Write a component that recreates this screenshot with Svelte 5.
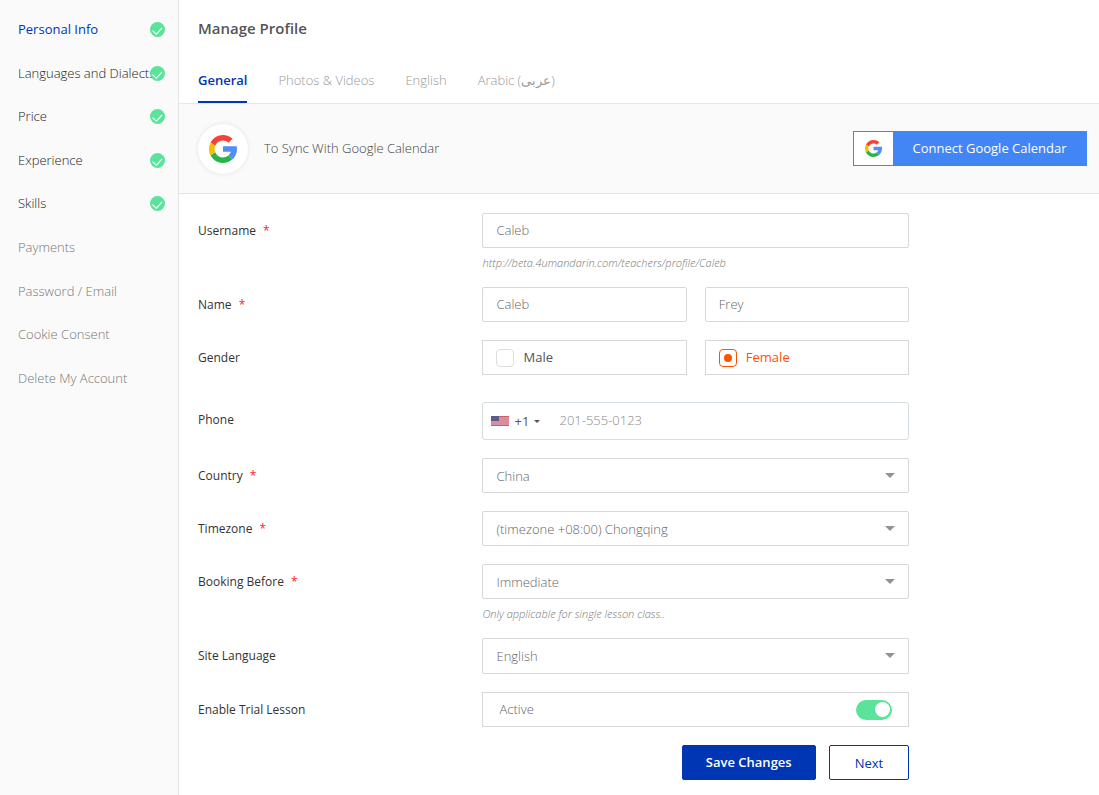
<script>
  const menu = [
    { title: 'Personal Info', done: true, active: true },
    { title: 'Languages and Dialects', done: true },
    { title: 'Price', done: true },
    { title: 'Experience', done: true },
    { title: 'Skills', done: true },
    { title: 'Payments' },
    { title: 'Password / Email' },
    { title: 'Cookie Consent' },
    { title: 'Delete My Account' }
  ];

  const tabs = ['General', 'Photos & Videos', 'English', 'Arabic (عربى)'];
  let activeTab = 'General';

  let username = 'Caleb';
  let firstName = 'Caleb';
  let lastName = 'Frey';
  let gender = 'Female';
  let phone = '';
  let trial = true;

  function save() {}
</script>

{#snippet google()}
  <svg class="google" viewBox="4 4 40 40" aria-hidden="true">
    <path fill="#f44336" d="M24 12c3 0 5.800 1.150 7.960 3.040l5.660-5.660C34.050 6.050 29.270 4 24 4 16.320 4 9.660 8.340 6.310 14.690l6.570 4.820C14.660 15.110 18.960 12 24 12z" />
    <path fill="#fbbc05" d="M6.310 14.690A19.900 19.900 0 0 0 4 24c0 3.370.84 6.540 2.310 9.310l6.570-4.820a12 12 0 0 1 0-8.980z" />
    <path fill="#28b446" d="M24 44c5.170 0 9.860-1.980 13.410-5.190l-6.190-5.240A11.900 11.900 0 0 1 24 36c-5.040 0-9.340-3.110-11.120-7.510l-6.570 4.820C9.660 39.660 16.320 44 24 44z" />
    <path fill="#518ef8" d="M43.610 20H24v8h11.300a12 12 0 0 1-4.080 5.570l6.190 5.240C36.970 39.200 44 34 44 24c0-1.340-.14-2.650-.39-4z" />
  </svg>
{/snippet}

<div class="page">
  <aside>
    <ul>
      {#each menu as item}
        <li>
          <a href="#menu" class:active={item.active} class:done={item.done}>{item.title}</a>
          {#if item.done}
            <svg class="check" viewBox="0 0 14 14" aria-hidden="true">
              <circle cx="7" cy="7" r="7" fill="#5be39b" />
              <path d="M2.300 8l3.700 3.400 5.300-5.900" fill="none" stroke="#fff" stroke-width="1" />
            </svg>
          {/if}
        </li>
      {/each}
    </ul>
  </aside>

  <main>
    <h1>Manage Profile</h1>

    <nav>
      {#each tabs as tab}
        <button type="button" class:active={tab === activeTab} on:click={() => (activeTab = tab)}>{tab}</button>
      {/each}
    </nav>

    <section class="sync">
      <span class="circle">{@render google()}</span>
      <p>To Sync With Google Calendar</p>
      <button type="button" class="connect">
        <span class="connect-icon">{@render google()}</span>
        <span class="connect-text">Connect Google Calendar</span>
      </button>
    </section>

    <form on:submit|preventDefault={save}>
      <div class="row">
        <label class="title" for="username">Username <i>*</i></label>
        <div>
          <input id="username" class="field" type="text" bind:value={username} />
          <p class="hint">http://beta.4umandarin.com/teachers/profile/{username}</p>
        </div>
      </div>

      <div class="row">
        <label class="title" for="first-name">Name <i>*</i></label>
        <div class="pair">
          <input id="first-name" class="field" type="text" bind:value={firstName} />
          <input class="field" type="text" aria-label="Last name" bind:value={lastName} />
        </div>
      </div>

      <div class="row gender">
        <span class="title" id="gender-title">Gender</span>
        <div class="pair" role="radiogroup" aria-labelledby="gender-title">
          {#each ['Male', 'Female'] as option}
            <label class="box radio" class:checked={gender === option}>
              <input type="radio" name="gender" value={option} bind:group={gender} />
              <span>{option}</span>
            </label>
          {/each}
        </div>
      </div>

      <div class="row">
        <label class="title" for="phone">Phone</label>
        <div class="phone">
          <button type="button" class="code">
            <svg class="flag" viewBox="0 0 18 10" aria-hidden="true">
              <rect width="18" height="10" fill="#db8e99" />
              <path d="M0 .5h18M0 9.500h18" stroke="#c9606f" />
              <rect width="8" height="5" fill="#5b5b8e" />
            </svg>
            <span>+1</span>
            <span class="caret"></span>
          </button>
          <input id="phone" type="tel" placeholder="201-555-0123" bind:value={phone} />
        </div>
      </div>

      <div class="row">
        <label class="title" for="country">Country <i>*</i></label>
        <div class="select">
          <select id="country" class="field"><option>China</option></select>
        </div>
      </div>

      <div class="row">
        <label class="title" for="timezone">Timezone <i>*</i></label>
        <div class="select">
          <select id="timezone" class="field"><option>(timezone +08:00) Chongqing</option></select>
        </div>
      </div>

      <div class="row">
        <label class="title" for="booking">Booking Before <i>*</i></label>
        <div>
          <div class="select">
            <select id="booking" class="field"><option>Immediate</option></select>
          </div>
          <p class="hint">Only applicable for single lesson class..</p>
        </div>
      </div>

      <div class="row">
        <label class="title" for="language">Site Language</label>
        <div class="select">
          <select id="language" class="field tall"><option>English</option></select>
        </div>
      </div>

      <div class="row">
        <label class="title" for="trial">Enable Trial Lesson</label>
        <div class="box trial">
          <span>Active</span>
          <input id="trial" type="checkbox" bind:checked={trial} />
        </div>
      </div>

      <div class="actions">
        <button type="submit" class="primary">Save Changes</button>
        <button type="button">Next</button>
      </div>
    </form>
  </main>
</div>

<style>
  :global(body) {
    background: #fff;
  }
  * {
    box-sizing: border-box;
  }
  .page {
    display: flex;
    min-height: 100vh;
    font-family: "Open Sans", "Noto Sans", "DejaVu Sans", sans-serif;
    font-size: 13px;
    color: #555;
  }
  button,
  input,
  select {
    font: inherit;
    margin: 0;
  }
  button {
    cursor: pointer;
  }

  /* sidebar */
  aside {
    flex: none;
    width: 179px;
    padding-top: 8px;
    background: #fafafa;
    border-right: 1px solid #e4e4e4;
  }
  ul {
    display: grid;
    grid-auto-rows: 1fr;
    height: 392px;
    margin: 0;
    padding: 0 13px 0 18px;
    list-style: none;
  }
  li {
    display: flex;
    align-items: center;
    justify-content: space-between;
  }
  li a {
    padding-bottom: 1px;
    color: #777;
    font-weight: 300;
    text-decoration: none;
    white-space: nowrap;
  }
  li a.done {
    color: #222;
  }
  li a.active {
    color: #0035b3;
    font-weight: 500;
  }
  .check {
    flex: none;
    width: 15px;
    height: 15px;
    margin-left: -10px;
  }

  /* header */
  main {
    flex: 1;
    min-width: 0;
  }
  h1 {
    margin: 0;
    padding: 17px 19px 0;
    font-size: 15px;
    font-weight: 600;
    line-height: 22px;
  }
  nav {
    display: flex;
    gap: 31px;
    padding: 19px 19px 0;
    border-bottom: 1px solid #e8e8e8;
  }
  nav button {
    height: 45px;
    padding: 0;
    border: 0;
    border-bottom: 2px solid transparent;
    background: none;
    color: #999;
    font-weight: 300;
  }
  nav button.active {
    color: #0035b3;
    border-color: #0035b3;
    font-weight: 600;
  }
  .sync {
    display: flex;
    align-items: center;
    gap: 16px;
    height: 90px;
    padding: 0 12px 0 19px;
    background: #fafafa;
    border-bottom: 1px solid #e4e4e4;
    color: #444;
  }
  .sync p {
    flex: 1;
    margin: 0;
    padding-bottom: 2px;
    font-weight: 300;
  }
  .google {
    width: 28px;
    height: 28px;
  }
  .circle {
    display: grid;
    place-items: center;
    width: 50px;
    height: 50px;
    border-radius: 50%;
    background: #fff;
    box-shadow: 0 0 4px #e2e2e2;
  }
  .connect {
    display: flex;
    width: 234px;
    height: 35px;
    padding: 0;
    border: 1px solid #4285f4;
    background: #4285f4;
    color: #fff;
  }
  .connect-icon {
    display: grid;
    place-items: center;
    width: 39px;
    height: 33px;
    background: #fff;
  }
  .connect-icon .google {
    width: 17px;
    height: 17px;
  }
  .connect-text {
    flex: 1;
    line-height: 33px;
  }

  /* form */
  form {
    display: flex;
    flex-direction: column;
    gap: 18px;
    width: calc((100% - 31px) * 0.8);
    box-sizing: content-box;
    padding: 19px 0 0 19px;
  }
  .row {
    display: grid;
    grid-template-columns: 2fr 3fr;
  }
  .gender {
    padding-bottom: 9px;
  }
  .title {
    color: #333;
    font-size: 12px;
    font-weight: 500;
    line-height: 35px;
  }
  .title i {
    margin-left: 4px;
    color: #f22;
    font-style: normal;
  }
  .field,
  .box {
    width: 100%;
    height: 35px;
    padding: 0 13px;
    border: 1px solid #d8d8d8;
    border-radius: 2px;
    background: #fff;
    color: #666;
    font-weight: 300;
  }
  .field {
    display: block;
  }
  input.field {
    padding-bottom: 2px;
  }
  .tall {
    height: 36px;
  }
  .box {
    border-radius: 0;
  }
  .hint {
    margin: 0;
    padding-top: 8px;
    color: #777;
    font-size: 11px;
    font-style: italic;
    font-weight: 300;
    line-height: 13px;
  }
  .pair {
    display: grid;
    grid-template-columns: 1fr 1fr;
    gap: 18px;
  }
  .radio {
    display: flex;
    align-items: center;
    gap: 9px;
    padding: 0 12px 0 13px;
    color: #555;
    font-weight: 400;
  }
  .radio span {
    padding-bottom: 2px;
  }
  .radio input {
    display: grid;
    place-items: center;
    width: 18px;
    height: 18px;
    appearance: none;
    border: 1px solid #ddd;
    border-radius: 4px;
  }
  .radio.checked {
    color: #ff5200;
    font-weight: 500;
  }
  .radio input:checked {
    border-color: #ff5200;
  }
  .radio input:checked::before {
    content: "";
    width: 8px;
    height: 8px;
    border-radius: 50%;
    background: #ff5200;
  }
  .phone {
    display: flex;
    height: 38px;
    border: 1px solid #d3dde2;
    border-radius: 3px;
  }
  .code {
    display: flex;
    align-items: center;
    gap: 5px;
    width: 76px;
    padding: 0 0 0 8px;
    border: 0;
    background: none;
    color: #555;
  }
  .flag {
    width: 18px;
    height: 10px;
  }
  .caret {
    border: 3px solid transparent;
    border-top-color: #555;
    border-bottom: 0;
  }
  .phone input {
    flex: 1;
    min-width: 0;
    padding: 0 0 2px;
    border: 0;
    outline: none;
    background: none;
    color: #666;
    font-weight: 300;
  }
  .phone input::placeholder {
    color: #888;
  }
  .select {
    position: relative;
  }
  .select select {
    appearance: none;
  }
  .select::after {
    content: "";
    position: absolute;
    top: 15px;
    right: 14px;
    border: 5px solid transparent;
    border-top-color: #929292;
    border-bottom: 0;
    pointer-events: none;
  }
  .trial {
    display: flex;
    align-items: center;
    justify-content: space-between;
    padding: 0 16px;
  }
  .trial span {
    padding-bottom: 2px;
  }
  .trial input {
    display: flex;
    align-items: center;
    width: 36px;
    height: 20px;
    padding: 0 2px;
    appearance: none;
    border-radius: 10px;
    background: #ccc;
  }
  .trial input::before {
    content: "";
    width: 15px;
    height: 15px;
    border-radius: 50%;
    background: #fff;
  }
  .trial input:checked {
    justify-content: flex-end;
    background: #5be39b;
  }
  .actions {
    display: flex;
    justify-content: flex-end;
    gap: 13px;
  }
  .actions button {
    height: 35px;
    padding: 0 25px;
    border: 1px solid #0035b3;
    border-radius: 2px;
    background: #fff;
    color: #0035b3;
    font-weight: 500;
  }
  .actions .primary {
    padding: 0 23px 2px;
    background: #0035b3;
    color: #fff;
    font-weight: 600;
  }
</style>
